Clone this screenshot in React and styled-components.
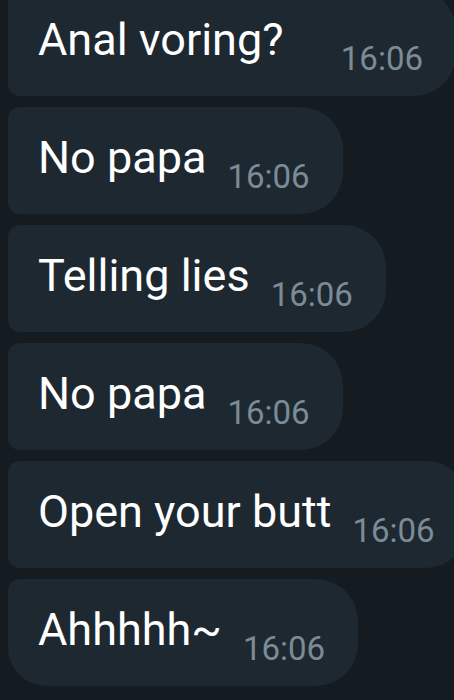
import React from 'react'
import styled, { createGlobalStyle } from 'styled-components'

const GlobalStyle = createGlobalStyle`
  html, body {
    margin: 0;
    padding: 0;
    background: #141b21;
    overflow: hidden;
  }
`

const Chat = styled.div`
  display: flex;
  flex-direction: column;
  align-items: flex-start;
  gap: 11px;
  padding: 0 0 0 8px;
  margin-top: -11px;
  width: 454px;
  height: 711px;
  overflow: hidden;
  background: #141b21;
  font-family: Roboto, "Liberation Sans", sans-serif;
`

const Bubble = styled.div`
  display: flex;
  align-items: flex-start;
  flex-shrink: 0;
  box-sizing: border-box;
  height: 107px;
  min-width: ${p => (p.$wide ? '448px' : '0')};
  padding: 24px 33px 0 30px;
  background: #1e2831;
  border-radius: 12px 42px 42px ${p => (p.$last ? '38px' : '12px')};
  white-space: nowrap;
`

const Text = styled.span`
  font-size: 45px;
  line-height: 53px;
  color: #ffffff;
`

const Time = styled.span`
  margin-top: 27px;
  margin-left: ${p => (p.$wide ? 'auto' : '21px')};
  padding-left: ${p => (p.$wide ? '21px' : '0')};
  font-size: 33px;
  line-height: 38px;
  color: #7b8c97;
`

const messages = [
  'Anal voring?',
  'No papa',
  'Telling lies',
  'No papa',
  'Open your butt',
  'Ahhhhh~',
]

const App = () => {
  return (
    <>
      <GlobalStyle />
      <Chat>
        {messages.map((m, i) => (
          <Bubble key={i} $wide={i === 0} $last={i === messages.length - 1}>
            <Text>{m}</Text>
            <Time $wide={i === 0}>16:06</Time>
          </Bubble>
        ))}
      </Chat>
    </>
  )
}

export default App
